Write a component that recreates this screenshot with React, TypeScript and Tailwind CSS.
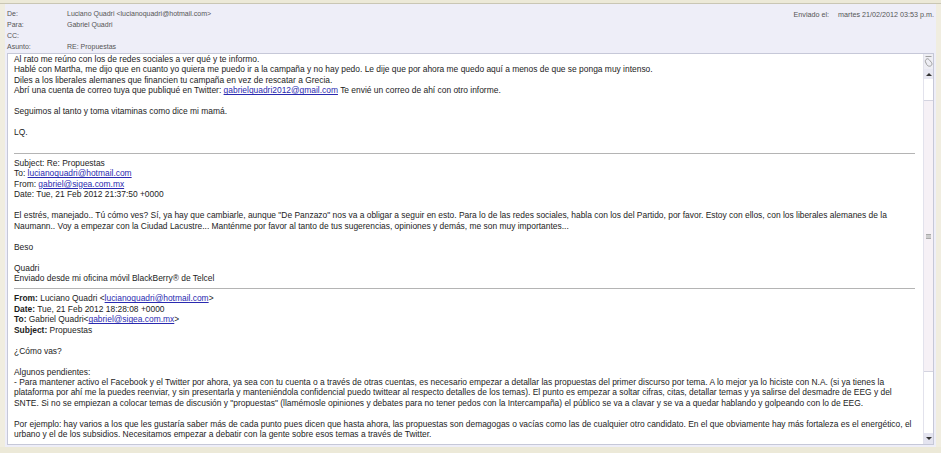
const link = 'text-[#2a2ab0] underline';

function Para({ children }: { children?: React.ReactNode }) {
  return <p className="min-h-[10.45px]">{children}</p>;
}

function HeaderRow({ label, value }: { label: string; value: string }) {
  return (
    <div className="flex h-[11px] items-center">
      <span className="w-[60px] shrink-0">{label}</span>
      <span>{value}</span>
    </div>
  );
}

export default function App() {
  return (
    <div
      className="flex h-[453px] w-[941px] flex-col overflow-hidden bg-[#f0ede0] text-[8.43px] leading-[10.45px] text-[#1c1c1c]"
      style={{ fontFamily: '"Liberation Sans", sans-serif' }}
    >
      <div className="h-[4px] shrink-0 border-b border-[#c9c6b4] bg-[#ece9d8]" />
      <div className="mr-[5px] ml-[5px] flex flex-1 flex-col bg-[#eeeef8] pr-[2px] pb-[2px] pl-[2px]">
        {/* message header */}
        <div className="flex h-[49px] shrink-0 justify-between pt-[5px] text-[7px] text-[#555]">
          <div>
            <HeaderRow label="De:" value="Luciano Quadri <lucianoquadri@hotmail.com>" />
            <HeaderRow label="Para:" value="Gabriel Quadri" />
            <HeaderRow label="CC:" value="" />
            <HeaderRow label="Asunto:" value="RE: Propuestas" />
          </div>
          <div className="flex gap-[9px] pt-[1px] text-[7.2px]">
            <span>Enviado el:</span>
            <span>martes 21/02/2012 03:53 p.m.</span>
          </div>
        </div>

        {/* message body */}
        <div className="flex min-h-0 flex-1 border border-[#c6c8d8] bg-white">
          <div className="min-w-0 flex-1 overflow-hidden pr-[8px] pl-[6px]">
            <Para>Al rato me reúno con los de redes sociales a ver qué y te informo.</Para>
            <Para>Hablé con Martha, me dijo que en cuanto yo quiera me puedo ir a la campaña y no hay pedo. Le dije que por ahora me quedo aquí a menos de que se ponga muy intenso.</Para>
            <Para>Diles a los liberales alemanes que financien tu campaña en vez de rescatar a Grecia.</Para>
            <Para>
              Abrí una cuenta de correo tuya que publiqué en Twitter: <span className={link}>gabrielquadri2012@gmail.com</span> Te envié un correo de ahí con otro informe.
            </Para>
            <Para />
            <Para>Seguimos al tanto y toma vitaminas como dice mi mamá.</Para>
            <Para />
            <Para>LQ.</Para>
            <Para />
            <hr className="my-[4.5px] border-[#b4b4b4]" />
            <Para>Subject: Re: Propuestas</Para>
            <Para>
              To: <span className={link}>lucianoquadri@hotmail.com</span>
            </Para>
            <Para>
              From: <span className={link}>gabriel@sigea.com.mx</span>
            </Para>
            <Para>Date: Tue, 21 Feb 2012 21:37:50 +0000</Para>
            <Para />
            <Para>El estrés, manejado.. Tú cómo ves? Sí, ya hay que cambiarle, aunque "De Panzazo" nos va a obligar a seguir en esto. Para lo de las redes sociales, habla con los del Partido, por favor. Estoy con ellos, con los liberales alemanes de la Naumann.. Voy a empezar con la Ciudad Lacustre... Manténme por favor al tanto de tus sugerencias, opiniones y demás, me son muy importantes...</Para>
            <Para />
            <Para>Beso</Para>
            <Para />
            <Para>Quadri</Para>
            <Para>Enviado desde mi oficina móvil BlackBerry® de Telcel</Para>
            <hr className="my-[4.5px] border-[#b4b4b4]" />
            <Para>
              <b>From:</b> Luciano Quadri &lt;<span className={link}>lucianoquadri@hotmail.com</span>&gt;
            </Para>
            <Para>
              <b>Date:</b> Tue, 21 Feb 2012 18:28:08 +0000
            </Para>
            <Para>
              <b>To:</b> Gabriel Quadri&lt;<span className={link}>gabriel@sigea.com.mx</span>&gt;
            </Para>
            <Para>
              <b>Subject:</b> Propuestas
            </Para>
            <Para />
            <Para>¿Cómo vas?</Para>
            <Para />
            <Para>Algunos pendientes:</Para>
            <Para>- Para mantener activo el Facebook y el Twitter por ahora, ya sea con tu cuenta o a través de otras cuentas, es necesario empezar a detallar las propuestas del primer discurso por tema. A lo mejor ya lo hiciste con N.A. (si ya tienes la plataforma por ahí me la puedes reenviar, y sin presentarla y manteniéndola confidencial puedo twittear al respecto detalles de los temas). El punto es empezar a soltar cifras, citas, detallar temas y ya salirse del desmadre de EEG y del SNTE. Si no se empiezan a colocar temas de discusión y "propuestas" (llamémosle opiniones y debates para no tener pedos con la Intercampaña) el público se va a clavar y se va a quedar hablando y golpeando con lo de EEG.</Para>
            <Para />
            <Para>Por ejemplo: hay varios a los que les gustaría saber más de cada punto pues dicen que hasta ahora, las propuestas son demagogas o vacías como las de cualquier otro candidato. En el que obviamente hay más fortaleza es el energético, el urbano y el de los subsidios. Necesitamos empezar a debatir con la gente sobre esos temas a través de Twitter.</Para>
          </div>

          {/* scrollbar */}
          <div className="flex w-[10px] shrink-0 flex-col border-l border-[#e2e2ec] bg-white">
            <div className="flex h-[15px] shrink-0 items-center justify-center bg-[#eeeef4]">
              <svg width="9" height="13" viewBox="0 0 9 13" fill="none" stroke="#8a8a8a" strokeWidth="0.8">
                <path d="M1.5 1.5h6" />
                <path d="M2 4.5c1-1 2-1 3 0l2.5 3c.8 1 .5 3-1 3.5-1.5.5-3 0-3.800-1.500L1.500 7c-.5-1 0-2 .5-2.500z" />
              </svg>
            </div>
            <div className="flex h-[10px] shrink-0 items-center justify-center bg-[#e8e8f2]">
              <div className="h-0 w-0 border-x-[3px] border-b-[3px] border-x-transparent border-b-[#333]" />
            </div>
            <div className="h-[21px] shrink-0" />
            <div className="flex h-[272px] shrink-0 items-center justify-center border-y border-[#d4d4e0] bg-[#f6f1f6]">
              <div className="h-[5px] w-[5px] border-y border-[#aaa] bg-[#ccc]" />
            </div>
            <div className="min-h-0 flex-1" />
            <div className="flex h-[11px] shrink-0 items-center justify-center bg-[#e4e4f0]">
              <div className="h-0 w-0 border-x-[3px] border-t-[3px] border-x-transparent border-t-[#333]" />
            </div>
          </div>
        </div>
      </div>
      <div className="h-[6px] shrink-0 bg-[#ece9d8]" />
    </div>
  );
}
